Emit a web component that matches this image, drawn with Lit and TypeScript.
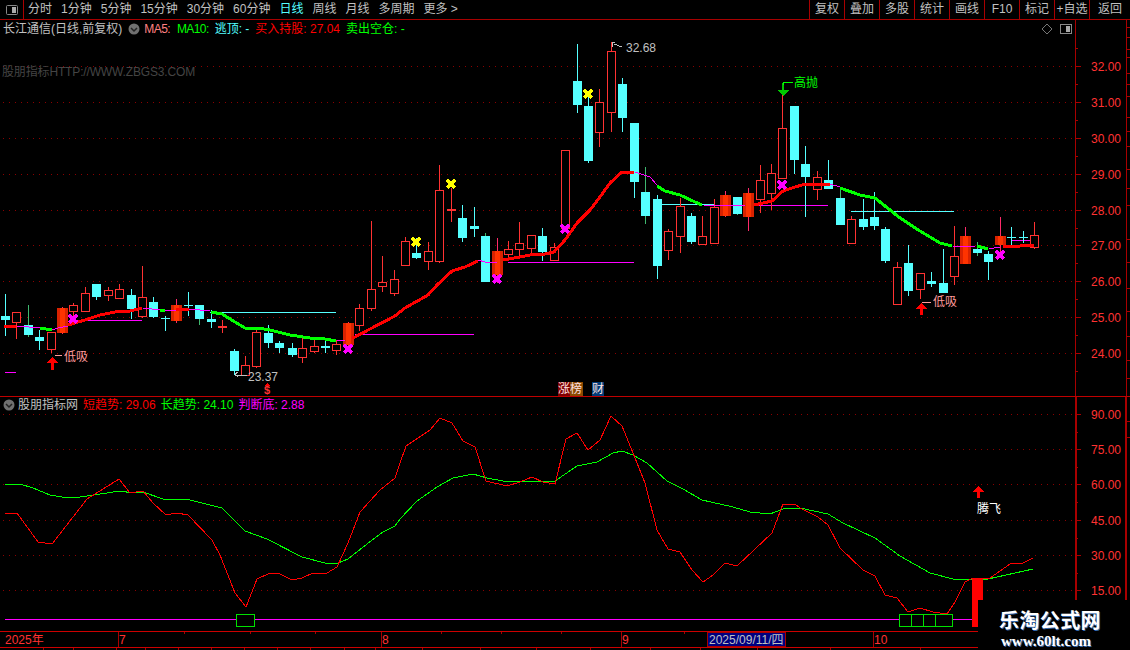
import { LitElement, html, css, svg } from "lit";
import { customElement } from "lit/decorators.js";

type C = [number, number, number, number, number, string];
const candles: C[] = [
  [5,294,316,320,336,"c"],[16,312,312,322,339,"h"],[28,305,325,335,337,"g"],[39,330,337,341,350,"c"],
  [51,332,332,349,353,"h"],[62,307,308,333,334,"f"],[73,303,305,311,320,"h"],[85,287,293,311,312,"h"],
  [96,284,284,297,300,"c"],[108,287,290,295,301,"h"],[119,284,289,298,298,"h"],[131,289,295,309,319,"c"],
  [142,266,297,316,318,"h"],[153,297,302,317,318,"c"],[165,316,318,319,331,"x"],[176,299,305,321,323,"f"],
  [188,292,305,306,316,"x"],[199,305,305,319,325,"g"],[211,310,319,322,328,"c"],[222,320,326,328,333,"r"],
  [234,349,351,371,375,"c"],[245,356,365,375,375,"h"],[256,328,332,366,368,"h"],[268,325,333,343,348,"c"],
  [279,341,343,348,353,"c"],[292,343,348,355,357,"c"],[302,335,348,357,363,"h"],[314,340,346,351,353,"h"],
  [325,341,346,348,353,"c"],[336,340,344,350,355,"h"],[348,322,323,345,347,"f"],[359,304,308,325,331,"h"],
  [371,221,289,308,311,"h"],[382,256,282,286,292,"h"],[394,270,279,293,296,"h"],[405,237,241,265,265,"h"],
  [416,238,253,258,259,"c"],[428,242,251,261,270,"h"],[439,165,190,261,263,"h"],[451,188,209,211,222,"r"],
  [462,205,218,238,242,"c"],[474,207,226,229,237,"c"],[485,233,236,282,282,"g"],[497,238,251,275,283,"f"],
  [508,241,249,254,257,"h"],[519,222,243,249,257,"h"],[531,235,235,248,253,"h"],[542,228,236,252,261,"c"],
  [554,243,247,260,260,"h"],[565,150,150,228,230,"h"],[577,44,81,105,113,"c"],[588,95,106,161,163,"c"],
  [599,89,102,132,147,"h"],[611,42,51,112,132,"h"],[622,78,84,118,132,"c"],[634,123,123,182,198,"c"],
  [645,167,192,216,224,"g"],[657,195,199,266,279,"c"],[668,229,231,250,260,"h"],[680,198,206,236,253,"h"],
  [691,213,216,242,244,"c"],[702,216,236,244,244,"h"],[714,199,207,243,243,"h"],[725,191,195,216,217,"f"],
  [737,197,197,214,215,"g"],[748,188,193,217,231,"f"],[760,165,180,199,213,"h"],[771,164,173,193,210,"h"],
  [782,95,128,178,178,"h"],[794,106,106,160,174,"c"],[805,146,164,177,217,"c"],[817,171,177,189,200,"h"],
  [828,160,180,189,189,"c"],[840,187,198,225,225,"g"],[851,216,219,243,243,"h"],[863,199,219,227,230,"c"],
  [874,192,217,226,230,"c"],[885,227,229,261,263,"c"],[897,262,267,304,304,"h"],[908,245,263,291,296,"c"],
  [920,273,273,289,299,"h"],[931,272,281,284,287,"c"],[943,249,283,293,293,"c"],[954,226,256,276,285,"h"],
  [965,227,236,264,264,"f"],[977,242,249,253,256,"g"],[988,251,254,262,280,"c"],[1000,217,236,245,253,"f"],
  [1011,227,237,238,247,"x"],[1023,231,237,238,243,"x"],[1034,222,235,247,249,"h"],
];

type Seg = [string, number[][]];
const ma: Seg[] = [
  ["mr",[[4,327],[16,326]]],
  ["mm",[[17,326],[40,328]]],
  ["mg",[[40,328],[52,330]]],
  ["mm",[[52,330],[58,328],[68,326]]],
  ["mr",[[68,325],[85,320],[100,315],[115,312],[130,311],[142,308]]],
  ["mm",[[143,308],[160,310]]],
  ["mg",[[160,310],[165,311]]],
  ["mm",[[165,310],[176,310]]],
  ["mr",[[176,309],[189,309]]],
  ["mm",[[189,309],[210,311]]],
  ["mg",[[211,312],[222,314],[235,322],[245,328],[258,328],[270,330],[290,335],[310,338],[325,339],[336,341]]],
  ["mm",[[337,340],[345,340]]],
  ["mr",[[352,338],[355,337],[370,329],[395,316],[405,308],[428,295],[437,285],[452,271],[465,267],[478,261]]],
  ["mm",[[478,260],[485,262],[497,262]]],
  ["mr",[[503,260],[520,257],[530,255],[545,254],[554,252],[565,240],[577,223],[590,210],[600,197],[610,183],[622,172],[634,172]]],
  ["mm",[[635,172],[650,177],[657,185]]],
  ["mg",[[657,186],[665,191],[680,195],[695,202],[702,205]]],
  ["mm",[[703,205],[745,206]]],
  ["mr",[[754,205],[772,201],[783,191],[795,187],[806,184],[830,184]]],
  ["mm",[[830,184],[840,187]]],
  ["mg",[[840,188],[860,195],[875,198],[885,206],[900,218],[920,231],[940,243],[952,246]]],
  ["mm",[[953,246],[975,247]]],
  ["mg",[[977,246],[988,249]]],
  ["mm",[[989,249],[1000,247]]],
  ["mr",[[1003,247],[1020,246],[1034,245]]],
];

const subGreen = [[5,484],[20,484],[33,488],[50,495],[68,498],[80,497],[100,494],[120,491],[133,493],[143,492],[163,499],[190,500],[222,508],[245,531],[267,539],[302,557],[325,563],[338,563],[348,559],[367,544],[383,532],[395,526],[400,519],[417,501],[437,487],[453,478],[473,474],[487,478],[503,481],[523,481],[555,481],[577,466],[597,462],[613,453],[622,451],[633,455],[647,463],[667,481],[683,489],[702,500],[733,507],[750,512],[770,514],[783,509],[800,508],[828,514],[843,523],[875,538],[900,556],[930,573],[953,579],[988,579],[1033,569]];
const subRed = [[5,513],[17,513],[38,542],[52,544],[87,499],[119,479],[130,493],[143,491],[153,503],[166,515],[177,513],[188,515],[212,540],[220,555],[235,593],[246,607],[257,579],[270,573],[280,574],[292,580],[302,578],[313,573],[327,573],[337,567],[348,543],[360,512],[380,490],[395,478],[400,463],[406,446],[430,430],[440,418],[452,423],[463,441],[475,447],[486,481],[507,486],[520,482],[532,477],[543,482],[555,484],[566,439],[577,433],[588,450],[600,440],[611,416],[622,426],[633,453],[645,483],[657,530],[668,549],[680,552],[692,570],[703,582],[713,575],[725,563],[737,566],[772,533],[783,504],[795,504],[800,508],[818,517],[828,525],[840,548],[863,570],[875,576],[885,595],[897,598],[908,612],[920,608],[933,612],[947,614],[955,602],[965,582],[973,578],[990,578],[1010,564],[1023,563],[1033,558]];

const mainGrid: [string, number][] = [["32.00",66],["31.00",102],["30.00",138],["29.00",174],["28.00",210],["27.00",245],["26.00",281],["25.00",317],["24.00",353]];
const subGrid: [string, number][] = [["90.00",414],["75.00",449],["60.00",484],["45.00",520],["30.00",555],["15.00",590]];
const levels: [string, number, number, number][] = [
  ["hm",75,142,320],["hc",210,336,312],["hm",355,474,334],["hm",508,634,262],
  ["hc",657,714,204],["hm",750,828,205],["hc",851,954,211],["hm",1011,1034,240],["hm",5,16,372],
];
const crosses: [string, number, number][] = [
  ["xm",73,319],["xm",348,349],["xm",497,279],["xm",565,229],["xm",782,185],["xm",1000,255],
  ["xy",416,242],["xy",451,184],["xy",588,94],
];
const pts = (p: number[][]) => p.map((q) => q.join(",")).join(" ");

const chevron = svg`<circle cx="6" cy="6" r="5.5" class="ic-c"></circle><path d="M3 5l3 3 3-3" class="ic-p"></path>`;

@customElement("app-root")
export class AppRoot extends LitElement {
  static styles = css`
    :host { display: block; width: 1130px; height: 650px; background: #000; overflow: hidden; position: relative;
      font: 12px "Liberation Sans", "Noto Sans CJK SC", sans-serif; color: #c0c0c0; }
    .page { display: flex; flex-direction: column; height: 650px; }
    .tb { display: flex; height: 19px; border-bottom: 1px solid #a80000; align-items: stretch; flex: none; }
    .tb-icon { width: 23px; border-right: 1px solid #a80000; display: flex; align-items: center; justify-content: center; flex: none; }
    .tb-left { display: flex; align-items: center; gap: 9px; padding-left: 4px; flex: 1; line-height: 19px; }
    .tb-left .on { color: #55ffff; }
    .tb-right { display: flex; }
    .tb-right span { width: 34px; border-left: 1px solid #a80000; text-align: center; line-height: 19px; white-space: nowrap; }
    .tb-right span:last-child { width: 40px; }
    .panel { display: flex; position: relative; flex: none; }
    .main { height: 376px; border-bottom: 1px solid #c00000; }
    .sub { height: 233px; }
    .plot { display: block; flex: none; }
    .axis { display: block; flex: none; }
    .hdr { position: absolute; left: 3px; display: flex; align-items: center; white-space: nowrap; height: 16px; line-height: 16px; }
    .hdr.m { top: 1px; gap: 6px; }
    .hdr.s { top: 0; gap: 5px; }
    .hdr .ic { display: block; }
    .hdr.s .ic { margin-right: -2px; }
    .hdr .tight { letter-spacing: -0.6px; }
    .hdr .i2 { margin-left: -2px; margin-right: 1px; }
    .wm { position: absolute; left: 2px; top: 45px; color: #444; letter-spacing: -0.15px; white-space: nowrap; line-height: 14px; }
    .pink { color: #ff8080; } .green { color: #00ff00; } .cyan { color: #55ffff; } .red { color: #ff0000; } .mag { color: #ff00ff; }
    .time { display: block; flex: none; height: 21px; }
    .logo { position: absolute; left: 978px; top: 600px; width: 152px; height: 50px; background: #000; display: flex; flex-direction: column; align-items: flex-start; padding-left: 21px; box-sizing: border-box; }
    .logo b { font: bold 20px/20px "Noto Sans CJK SC", sans-serif; color: #fff; letter-spacing: 0.4px; margin-top: 10px; text-shadow: 1px 1px 0 #36a; }
    .logo i { font: bold 15px/14px "Liberation Serif", serif; color: #fff; margin: 4px 0 0 2px; text-shadow: 1px 1px 0 #36a; }
    svg text { font-family: "Liberation Sans", "Noto Sans CJK SC", sans-serif; font-size: 12px; }
    .crisp { shape-rendering: crispEdges; }
    .dot { stroke: #8c0000; stroke-dasharray: 1 5; stroke-width: 1; }
    .wr { stroke: #ff3232; } .wc { stroke: #55ffff; } .wg { stroke: #3fb86f; } .wp { stroke: #ff2a6a; }
    .bh { fill: #000; stroke: #ff3232; }
    .bc { fill: #55ffff; } .br { fill: #ff3232; } .bf { fill: #d92200; } .bo { fill: #ff3300; }
    .mr, .mg, .mm, .lr, .lg { fill: none; }
    .mr { stroke: #ff0000; stroke-width: 3; } .mg { stroke: #00ff00; stroke-width: 3; } .mm { stroke: #ff00ff; stroke-width: 1; }
    .lr { stroke: #ff0000; } .lg { stroke: #00ff00; }
    .hm { stroke: #ff00ff; } .hc { stroke: #55ffff; }
    .xm, .xy { fill: none; stroke-width: 3; }
    .xm { stroke: #ff00ff; } .xy { stroke: #ffff00; }
    .arr { fill: #ff0000; } .arrg { fill: #00c800; }
    .ln { stroke: #a80000; fill: none; }
    .ln2 { stroke: #a80000; fill: none; stroke-width: 2; }
    .ln3 { stroke: #cc0000; fill: none; }
    .gy { stroke: #c0c0c0; fill: none; } .pk { stroke: #ff9a9a; fill: none; } .gl { stroke: #00ff00; fill: none; }
    .t-gy { fill: #c0c0c0; } .t-pk { fill: #ff9a9a; } .t-gr { fill: #00ff00; } .t-ax { fill: #ff3232; } .t-wh { fill: #ffffff; }
    .t-b { fill: #ffe0e0; }
    .b1 { fill: #800000; } .b2 { fill: #8b4a00; } .b3 { fill: #003c78; }
    .g-box { fill: #000; stroke: #00e000; }
    .bar { fill: #ff0000; }
    .date { fill: #000080; stroke: #a80000; }
    svg text.dollar { font-weight: bold; font-size: 11px; }
    .ic-c { fill: #707070; } .ic-p { fill: none; stroke: #222; stroke-width: 1.5; }
    .pi { fill: none; stroke: #888; } .pf { fill: #aaa; }
    .dm { fill: none; stroke: #777; }
  `;

  private candle(c: C) {
    const [x, hi, top, bot, lo, k] = c;
    const w = x + 0.5;
    const wc = k === "h" || k === "r" ? "wr" : k === "f" ? "wp" : k === "g" ? "wg" : "wc";
    const wick = svg`<line class=${wc} x1=${w} x2=${w} y1=${hi} y2=${lo}></line>`;
    if (k === "h") return svg`${wick}<rect class="bh" x=${x - 3.5} y=${top + 0.5} width="8" height=${bot - top}></rect>`;
    if (k === "f") return svg`${wick}<rect class="bf" x=${x - 5} y=${top} width="11" height=${bot - top}></rect><rect class="bo" x=${x - 2} y=${top} width="5" height=${bot - top}></rect>`;
    if (k === "r") return svg`${wick}<rect class="br" x=${x - 4} y=${top} width="9" height=${bot - top}></rect>`;
    return svg`${wick}<rect class="bc" x=${x - 4} y=${top} width="9" height=${bot - top}></rect>`;
  }

  private mainPlot() {
    return svg`<svg class="plot crisp" width="1075" height="376" viewBox="0 20 1075 376">
      ${mainGrid.map(([, y]) => svg`<line class="dot" x1="3" x2="1075" y1=${y + 0.5} y2=${y + 0.5}></line>`)}
      ${levels.map(([c, a, b, y]) => svg`<line class=${c} x1=${a} x2=${b} y1=${y + 0.5} y2=${y + 0.5}></line>`)}
      ${candles.map((c) => this.candle(c))}
      ${ma.map(([c, p]) => svg`<polyline class=${c} points=${pts(p)}></polyline>`)}
      ${crosses.map(([c, x, y]) => svg`<path class=${c} d="M${x - 4} ${y - 4}L${x + 4} ${y + 4}M${x + 4} ${y - 4}L${x - 4} ${y + 4}"></path>`)}
      <path class="arr" d="M52 357L58 363H54V370H51V363H46Z"></path>
      <path class="pk" d="M55 356L62 355"></path>
      <text class="t-pk" x="64" y="361">低吸</text>
      <path class="arr" d="M921 303L927 309H923V315H920V309H915Z"></path>
      <path class="pk" d="M922 303V302L931 302"></path>
      <text class="t-pk" x="933" y="306">低吸</text>
      <path class="arrg" d="M782 83H784V90H789L783 96L777 90H782Z"></path>
      <path class="gl" d="M783.5 85V82L793 82"></path>
      <text class="t-gr" x="794" y="87">高抛</text>
      <path class="gy" d="M238 372L235 374L238 377M235 375L247 375"></path>
      <text class="t-gy" x="248" y="381">23.37</text>
      <path class="gy" d="M612.5 47V42H615M614 44L622 47"></path>
      <text class="t-gy" x="626" y="52">32.68</text>
      <path class="arr" d="M267 383L270 386H264Z"></path>
      <text class="t-ax dollar" x="264" y="394">$</text>
      <rect class="b1" x="558" y="382" width="13" height="14"></rect>
      <rect class="b2" x="570" y="382" width="13" height="14"></rect>
      <rect class="b3" x="592" y="382" width="12" height="14"></rect>
      <text class="t-b" x="558" y="393">涨</text>
      <text class="t-b" x="570" y="393">榜</text>
      <text class="t-b" x="592" y="393">财</text>
      <path class="dm" d="M1047 24L1052 29L1047 34L1042 29Z"></path>
      <rect class="pi" x="1060.5" y="24.5" width="11" height="9" rx="1"></rect>
      <rect class="pf" x="1066" y="26" width="4" height="6"></rect>
    </svg>`;
  }

  private mainAxis() {
    const right = [27,37,49,57,73,84,96,117,131,146,169,188,205,239,262,288,311,336,360,378];
    return svg`<svg class="axis crisp" width="55" height="376" viewBox="1075 20 55 376">
      <line class="ln" x1="1075.5" x2="1075.5" y1="20" y2="396"></line>
      <line class="ln" x1="1126.5" x2="1126.5" y1="20" y2="396"></line>
      ${right.map((y) => svg`<line class="ln" x1="1127" x2="1130" y1=${y + 0.5} y2=${y + 0.5}></line>`)}
      ${mainGrid.map(([t, y]) => svg`<line class="ln" x1="1075" x2="1081" y1=${y + 0.5} y2=${y + 0.5}></line>
        <line class="ln" x1="1075" x2="1078" y1=${y + 18.5} y2=${y + 18.5}></line>
        <text class="t-ax" x="1091" y=${y + 5}>${t}</text>`)}
      <line class="ln" x1="1075" x2="1078" y1="48.5" y2="48.5"></line>
    </svg>`;
  }

  private subPlot() {
    return svg`<svg class="plot crisp" width="1075" height="233" viewBox="0 397 1075 233">
      ${subGrid.map(([, y]) => svg`<line class="dot" x1="3" x2="1075" y1=${y + 0.5} y2=${y + 0.5}></line>`)}
      <line class="hm" x1="5" x2="972" y1="619.5" y2="619.5"></line>
      <polyline class="lg" points=${pts(subGreen)}></polyline>
      <polyline class="lr" points=${pts(subRed)}></polyline>
      <rect class="g-box" x="236.5" y="614.5" width="18" height="12"></rect>
      <rect class="g-box" x="899.5" y="614.5" width="12" height="12"></rect>
      <rect class="g-box" x="911.5" y="614.5" width="12" height="12"></rect>
      <rect class="g-box" x="923.5" y="614.5" width="12" height="12"></rect>
      <rect class="g-box" x="935.5" y="614.5" width="17" height="12"></rect>
      <rect class="bar" x="972" y="578" width="11" height="22"></rect>
      <rect class="bar" x="972" y="600" width="6" height="27"></rect>
      <path class="arr" d="M978 486L984 492H979.5V498H976.5V492H972Z"></path>
      <text class="t-wh" x="977" y="513">腾飞</text>
    </svg>`;
  }

  private subAxis() {
    return svg`<svg class="axis crisp" width="55" height="233" viewBox="1075 397 55 233">
      <line class="ln2" x1="1076" x2="1076" y1="397" y2="630"></line>
      <line class="ln2" x1="1126" x2="1126" y1="397" y2="630"></line>
      <line class="ln" x1="1127" x2="1130" y1="421.5" y2="421.5"></line>
      <line class="ln" x1="1127" x2="1130" y1="437.5" y2="437.5"></line>
      ${subGrid.map(([t, y]) => svg`<line class="ln" x1="1076" x2="1081" y1=${y + 0.5} y2=${y + 0.5}></line>
        <line class="ln" x1="1076" x2="1078" y1=${y + 18.5} y2=${y + 18.5}></line>
        <text class="t-ax" x="1091" y=${y + 5}>${t}</text>`)}
    </svg>`;
  }

  private timeAxis() {
    const marks: [number, string][] = [[118,"7"],[381,"8"],[621,"9"],[873,"10"]];
    const top = [184,250,315,441,501,561,684,738];
    const low = [43,73,116,145,178,211,244,277,310,344,375,422,480,536,590,650,700,757,830,920,1000,1040];
    return svg`<svg class="time crisp" width="1130" height="21" viewBox="0 629 1130 21">
      <line class="ln3" x1="0" x2="1130" y1="630.5" y2="630.5"></line>
      <line class="ln3" x1="0" x2="1130" y1="646.5" y2="646.5"></line>
      ${top.map((x) => svg`<line class="ln" x1=${x + 0.5} x2=${x + 0.5} y1="631" y2="633"></line>`)}
      ${low.map((x) => svg`<line class="ln" x1=${x + 0.5} x2=${x + 0.5} y1="647" y2="650"></line>`)}
      ${marks.map(([x, t]) => svg`<line class="ln" x1=${x + 0.5} x2=${x + 0.5} y1="631" y2="646"></line>
        <text class="t-ax" x=${x + 1} y="643">${t}</text>`)}
      <text class="t-ax" x="5" y="643">2025年</text>
      <rect class="date" x="707.5" y="631.5" width="78" height="14"></rect>
      <text class="t-gy" x="709" y="643">2025/09/11/四</text>
    </svg>`;
  }

  render() {
    const left = ["分时","1分钟","5分钟","15分钟","30分钟","60分钟"];
    const left2 = ["周线","月线","多周期","更多 >"];
    const right = ["复权","叠加","多股","统计","画线","F10","标记","+自选","返回"];
    return html`<div class="page">
      <div class="tb">
        <div class="tb-icon"><svg width="14" height="12" viewBox="0 0 14 12"><rect class="pi" x="1.5" y="1.5" width="11" height="9" rx="1"></rect><rect class="pf" x="7" y="3" width="4" height="6"></rect></svg></div>
        <div class="tb-left">
          ${left.map((t) => html`<span>${t}</span>`)}
          <span class="on">日线</span>
          ${left2.map((t) => html`<span>${t}</span>`)}
        </div>
        <div class="tb-right">${right.map((t) => html`<span>${t}</span>`)}</div>
      </div>
      <div class="panel main">
        ${this.mainPlot()}${this.mainAxis()}
        <div class="hdr m">
          <span>长江通信(日线,前复权)</span>
          <svg class="ic" width="12" height="12" viewBox="0 0 12 12">${chevron}</svg>
          <span class="pink i2 tight">MA5:</span>
          <span class="green tight">MA10:</span>
          <span class="cyan">逃顶: -</span>
          <span class="red">买入持股: 27.04</span>
          <span class="green">卖出空仓: -</span>
        </div>
        <div class="wm">股朋指标HTTP://WWW.ZBGS3.COM</div>
      </div>
      <div class="panel sub">
        ${this.subPlot()}${this.subAxis()}
        <div class="hdr s">
          <svg class="ic" width="12" height="12" viewBox="0 0 12 12">${chevron}</svg>
          <span>股朋指标网</span>
          <span class="red">短趋势: 29.06</span>
          <span class="green">长趋势: 24.10</span>
          <span class="mag">判断底: 2.88</span>
        </div>
      </div>
      ${this.timeAxis()}
    </div>
    <div class="logo"><b>乐淘公式网</b><i>www.60lt.com</i></div>`;
  }
}
